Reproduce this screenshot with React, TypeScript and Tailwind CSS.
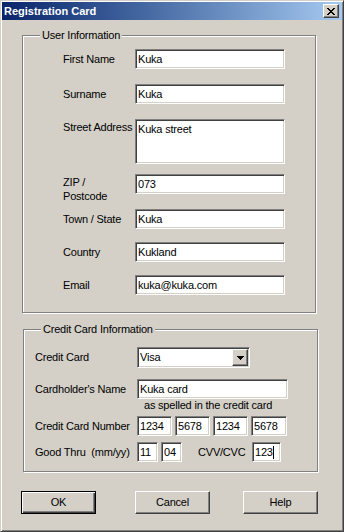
const edit =
  'bg-white border border-t-[#808080] border-l-[#808080] border-b-white border-r-white shadow-[inset_1px_1px_0_#404040,inset_-1px_-1px_0_#d4d0c8] pl-[2px] leading-[13px] whitespace-nowrap overflow-hidden';

const raised =
  'border border-t-white border-l-white border-r-[#404040] border-b-[#404040] shadow-[inset_-1px_-1px_0_#808080]';

function Edit({ value, className, caret }: { value: string; className: string; caret?: boolean }) {
  return (
    <div className={`${edit} ${className} flex items-start pt-[3px]`}>
      <span>{value}</span>
      {caret && <span className="w-px h-[13px] bg-black" />}
    </div>
  );
}

function Group({ title, className, children }: { title: string; className: string; children: React.ReactNode }) {
  return (
    <div className={`relative border border-[#808080] shadow-[1px_1px_0_white,inset_1px_1px_0_white] ${className}`}>
      <span className="absolute -top-[7px] left-[17px] px-[2px] bg-[#d4d0c8] leading-[13px] whitespace-nowrap">{title}</span>
      {children}
    </div>
  );
}

function Row({ label, children, className }: { label: React.ReactNode; children: React.ReactNode; className: string }) {
  return (
    <div className={`flex items-center pl-[40px] ${className}`}>
      <div className="w-[72px] leading-[13px] whitespace-nowrap">{label}</div>
      {children}
    </div>
  );
}

export default function App() {
  return (
    <div className="w-[344px] h-[532px] bg-[#d4d0c8] text-black text-[11px] tracking-[-0.2px] font-['Liberation_Sans',Arial,sans-serif] border border-t-[#d4d0c8] border-l-[#d4d0c8] border-r-[#404040] border-b-[#404040] shadow-[inset_1px_1px_0_white,inset_-1px_-1px_0_#808080] p-px overflow-hidden">
      <div className="h-[18px] flex items-center justify-between pl-[2px] pr-[3px] bg-gradient-to-r from-[#0a246a] to-[#a6caf0]">
        <span className="text-white font-bold leading-[13px] tracking-normal">Registration Card</span>
        <div className={`w-[16px] h-[14px] bg-[#d4d0c8] ${raised} flex items-center justify-center`}>
          <svg width="8" height="7" viewBox="0 0 8 7" shapeRendering="crispEdges">
            <path d="M0 0h2v1H0zM6 0h2v1H6zM1 1h2v1H1zM5 1h2v1H5zM2 2h4v1H2zM3 3h2v1H3zM2 4h4v1H2zM1 5h2v1H1zM5 5h2v1H5zM0 6h2v1H0zM6 6h2v1H6z" fill="black" />
          </svg>
        </div>
      </div>

      <Group title="User Information" className="ml-[20px] mt-[15px] w-[294px] h-[278px]">
        <Row label="First Name" className="mt-[13px]">
          <Edit value="Kuka" className="w-[150px] h-[20px]" />
        </Row>
        <Row label="Surname" className="mt-[15px]">
          <Edit value="Kuka" className="w-[150px] h-[20px]" />
        </Row>
        <div className="flex items-start pl-[40px] mt-[15px]">
          <div className="w-[72px] leading-[13px] pt-[2px] whitespace-nowrap">Street Address</div>
          <Edit value="Kuka street" className="w-[150px] h-[45px]" />
        </div>
        <div className="flex items-start pl-[40px] mt-[10px] h-[20px]">
          <div className="w-[72px] leading-[14px] pt-px">
            ZIP /<br />Postcode
          </div>
          <Edit value="073" className="w-[150px] h-[20px]" />
        </div>
        <Row label="Town / State" className="mt-[15px]">
          <Edit value="Kuka" className="w-[150px] h-[20px]" />
        </Row>
        <Row label="Country" className="mt-[13px]">
          <Edit value="Kukland" className="w-[150px] h-[20px]" />
        </Row>
        <Row label="Email" className="mt-[13px]">
          <Edit value="kuka@kuka.com" className="w-[150px] h-[20px]" />
        </Row>
      </Group>

      <Group title="Credit Card Information" className="ml-[21px] mt-[16px] w-[295px] h-[143px]">
        <div className="flex items-center pl-[11px] mt-[17px]">
          <div className="w-[102px]">Credit Card</div>
          <div className={`${edit} w-[113px] h-[21px] flex items-center justify-between pr-[1px]`}>
            <span>Visa</span>
            <div className={`w-[16px] h-[17px] bg-[#d4d0c8] ${raised} flex items-center justify-center`}>
              <svg width="7" height="4" viewBox="0 0 7 4" shapeRendering="crispEdges">
                <path d="M0 0h7v1H0zM1 1h5v1H1zM2 2h3v1H2zM3 3h1v1H3z" fill="black" />
              </svg>
            </div>
          </div>
        </div>
        <div className="flex items-center pl-[11px] mt-[11px]">
          <div className="w-[102px] whitespace-nowrap">Cardholder's Name</div>
          <Edit value="Kuka card" className="w-[151px] h-[20px]" />
        </div>
        <div className="pl-[120px] leading-[13px]">as spelled in the credit card</div>
        <div className="flex items-center pl-[11px] mt-[4px]">
          <div className="w-[102px] whitespace-nowrap">Credit Card Number</div>
          <div className="flex gap-[3px]">
            <Edit value="1234" className="w-[35px] h-[20px]" />
            <Edit value="5678" className="w-[35px] h-[20px]" />
            <Edit value="1234" className="w-[35px] h-[20px]" />
            <Edit value="5678" className="w-[36px] h-[20px]" />
          </div>
        </div>
        <div className="flex items-center pl-[11px] mt-[6px]">
          <div className="w-[102px] whitespace-pre">Good Thru  (mm/yy)</div>
          <div className="flex gap-[3px]">
            <Edit value="11" className="w-[21px] h-[20px]" />
            <Edit value="04" className="w-[21px] h-[20px]" />
          </div>
          <span className="ml-[16px] w-[54px]">CVV/CVC</span>
          <Edit value="123" caret className="w-[29px] h-[20px]" />
        </div>
      </Group>

      <div className="flex pl-[19px] mt-[19px]">
        <button className="w-[75px] h-[23px] border border-black shadow-[inset_1px_1px_0_white,inset_-1px_-1px_0_#404040,inset_-2px_-2px_0_#808080] bg-[#d4d0c8]">
          OK
        </button>
        <button className={`ml-[39px] w-[75px] h-[23px] bg-[#d4d0c8] ${raised}`}>Cancel</button>
        <button className={`ml-[33px] w-[75px] h-[23px] bg-[#d4d0c8] ${raised}`}>Help</button>
      </div>
    </div>
  );
}
